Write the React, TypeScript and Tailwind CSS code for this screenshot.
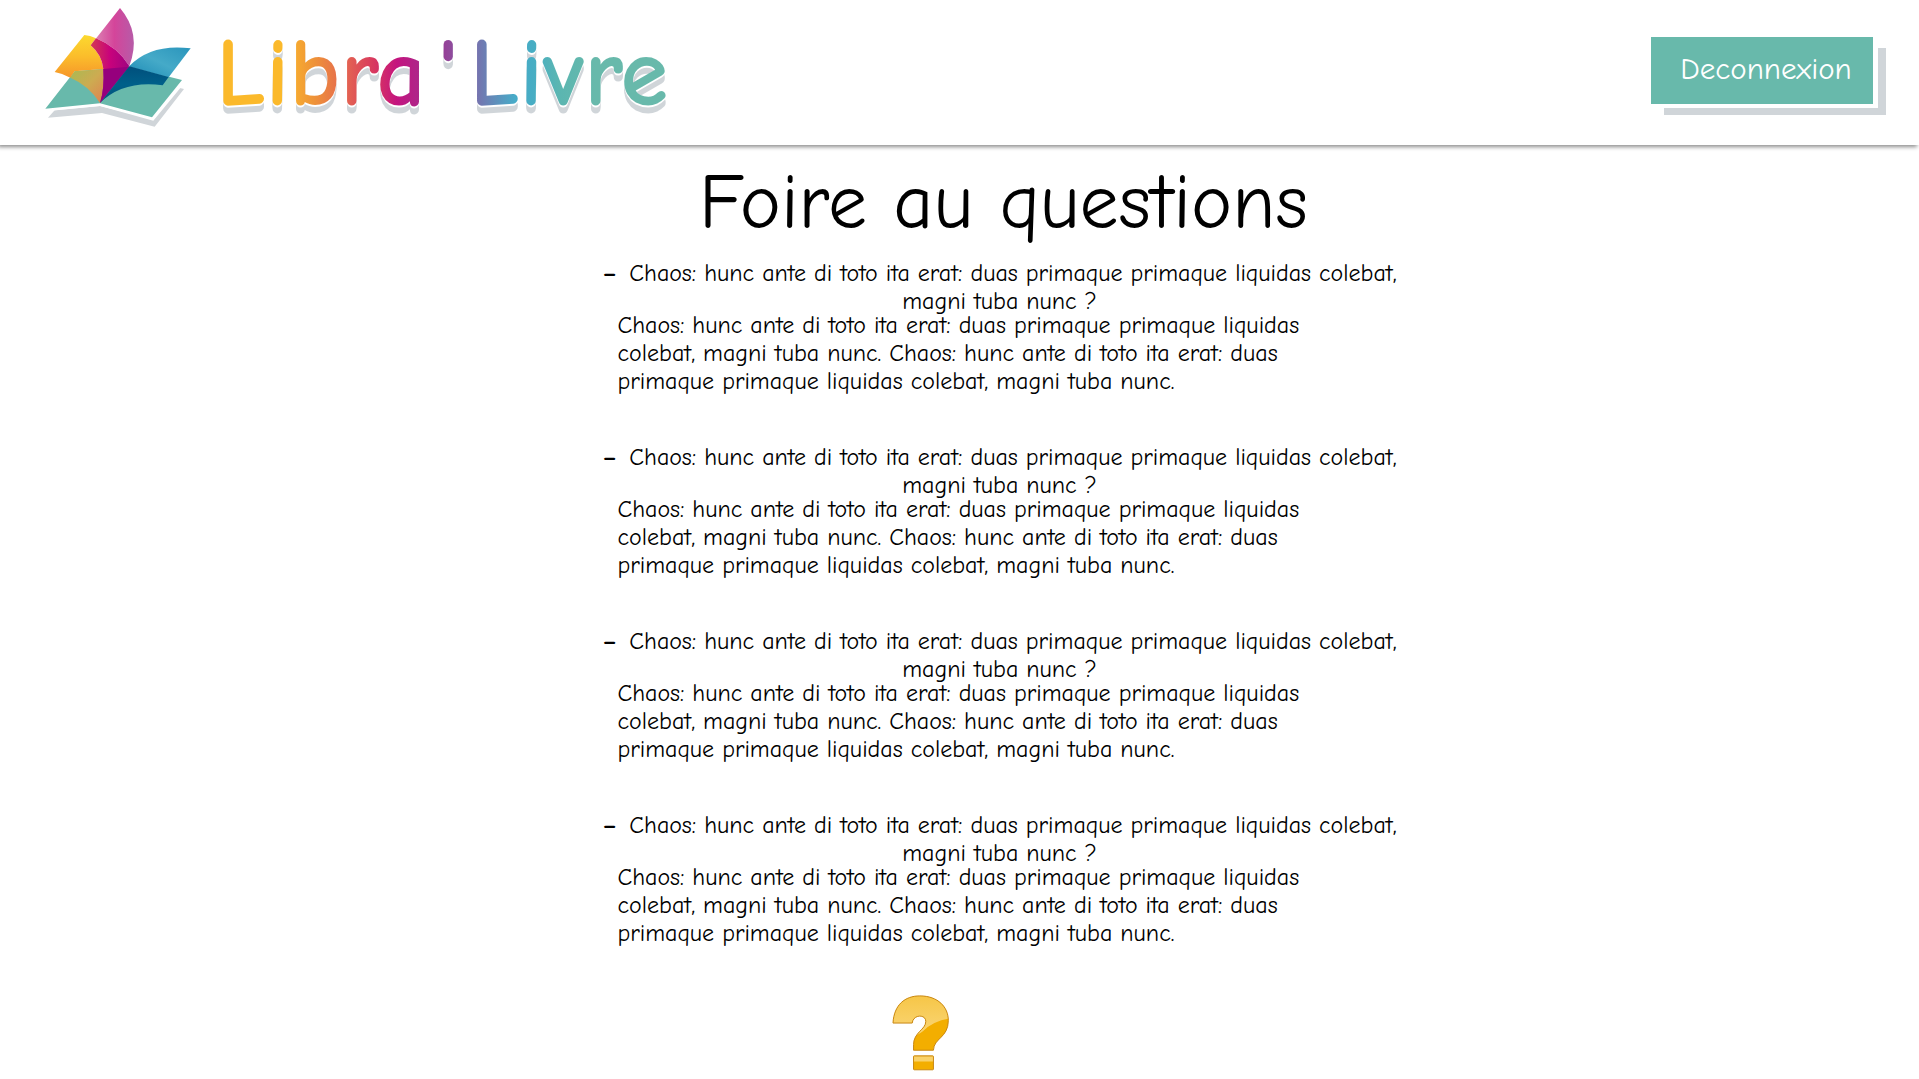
import React from "react";

const QUESTION =
  "Chaos: hunc ante di toto ita erat: duas primaque primaque liquidas colebat, magni tuba nunc ?";
const ANSWER =
  "Chaos: hunc ante di toto ita erat: duas primaque primaque liquidas colebat, magni tuba nunc. Chaos: hunc ante di toto ita erat: duas primaque primaque liquidas colebat, magni tuba nunc.";

const faq = [1, 2, 3, 4].map((id) => ({ id, question: QUESTION, answer: ANSWER }));

function BookLogo() {
  return (
    <svg viewBox="45 24 441 363" className="h-[121px] w-[147px] shrink-0" aria-hidden="true">
      <defs>
        <linearGradient id="yellow" x1="0" y1="0" x2="0" y2="1">
          <stop offset="0" stopColor="#fcd92f" />
          <stop offset="0.5" stopColor="#fbbd2b" />
          <stop offset="1" stopColor="#f6962a" />
        </linearGradient>
        <linearGradient id="olive" x1="0" y1="0" x2="1" y2="1">
          <stop offset="0" stopColor="#a9bb52" />
          <stop offset="0.5" stopColor="#cdab51" />
          <stop offset="1" stopColor="#e08150" />
        </linearGradient>
        <linearGradient id="pink" x1="0" y1="0" x2="1" y2="0">
          <stop offset="0" stopColor="#dd8fb8" />
          <stop offset="0.55" stopColor="#d4459a" />
          <stop offset="1" stopColor="#b75ba8" />
        </linearGradient>
        <linearGradient id="magenta" x1="0" y1="0" x2="1" y2="0">
          <stop offset="0" stopColor="#d33a52" />
          <stop offset="0.5" stopColor="#c8027c" />
          <stop offset="1" stopColor="#9f0480" />
        </linearGradient>
        <linearGradient id="blue" x1="0" y1="1" x2="1" y2="0">
          <stop offset="0" stopColor="#1c8ab5" />
          <stop offset="0.5" stopColor="#45aac8" />
          <stop offset="1" stopColor="#2a95bc" />
        </linearGradient>
        <linearGradient id="navy" x1="0" y1="0" x2="0" y2="1">
          <stop offset="0" stopColor="#004f7c" />
          <stop offset="0.5" stopColor="#00608a" />
          <stop offset="1" stopColor="#004f78" />
        </linearGradient>
      </defs>
      <path d="M54 353L74 331L210 318L364 356L440 262L462 267L374 380L216 339Z" fill="#d0d5d9" />
      <path d="M46 326L210 310L366 352L456 240L464 248L370 362L210 318L48 334Z" fill="#fff" />
      <path d="M46 326L134 214L298 200L456 240L366 352L210 310Z" fill="#68b9ab" />
      <path d="M74 216L163 105Q180 106 198 115L182 136Q216 165 220 207L134 214L121 233Q100 221 74 216Z" fill="url(#yellow)" />
      <path d="M121 233L134 214L220 207Q224 260 210 309Q176 256 121 233Z" fill="url(#olive)" />
      <path d="M182 136L270 24Q335 100 298 198Q262 141 198 115Z" fill="url(#pink)" />
      <path d="M182 136L198 115Q262 141 298 198L210 309Q224 265 220 207Q216 165 182 136Z" fill="url(#magenta)" />
      <path d="M220 207L298 200L210 309Q224 265 220 207Z" fill="#96007d" />
      <path d="M298 198Q364 130 482 145L416 232L300 201Z" fill="url(#blue)" />
      <path d="M298 199L416 231L398 256Q280 240 210 309Z" fill="url(#navy)" />
    </svg>
  );
}

function QuestionIcon() {
  return (
    <svg viewBox="66 76 172 228" className="h-[76px] w-[57px]" role="img" aria-label="Aide">
      <defs>
        <linearGradient id="gold" x1="0" y1="0" x2="0" y2="1">
          <stop offset="0" stopColor="#f6c544" />
          <stop offset="1" stopColor="#fad678" />
        </linearGradient>
        <clipPath id="mark">
          <path d="M69 160C72 105 105 78 150 78C205 78 236 112 236 152C236 205 192 205 191 242H131V225C131 188 168 180 168 155C168 133 130 133 127 160Z" />
        </clipPath>
      </defs>
      <path d="M69 160C72 105 105 78 150 78C205 78 236 112 236 152C236 205 192 205 191 242H131V225C131 188 168 180 168 155C168 133 130 133 127 160Z" fill="#f3ae00" />
      <path d="M60 70H240V146Q190 154 160 184Q140 200 125 200H60Z" fill="url(#gold)" clipPath="url(#mark)" />
      <path d="M69 160C72 105 105 78 150 78C205 78 236 112 236 152C236 205 192 205 191 242H131V225C131 188 168 180 168 155C168 133 130 133 127 160Z" fill="none" stroke="#c98712" strokeWidth="3" />
      <rect x="131" y="259" width="60" height="42" rx="2" fill="#f3ae00" />
      <path d="M132 260H190V276H132Z" fill="#f9d26a" />
      <rect x="131" y="259" width="60" height="42" rx="2" fill="none" stroke="#c98712" strokeWidth="3" />
    </svg>
  );
}

export default function App() {
  return (
    <div className="min-h-screen overflow-x-hidden bg-white font-['Comic_Neue','DejaVu_Sans',sans-serif] text-black">
      <header className="flex h-[145px] items-start justify-between pr-[46px] pl-[45px] shadow-[-2px_2px_4px_rgba(0,0,0,0.45)]">
        <a href="#" className="flex items-start gap-6 pt-2">
          <BookLogo />
          <span className="bg-[linear-gradient(90deg,#fbb92b_0%,#fbb92b_15%,#ee9139_22%,#e56a50_28%,#d8385f_35%,#c4147f_40%,#9b3592_49%,#7f67a9_56%,#48abc8_66%,#47adc4_70%,#5bb6b1_76%,#68b9ab_84%)] bg-clip-text pt-4 text-[97px] leading-[100px] font-bold text-transparent [filter:drop-shadow(0_2px_0_white)_drop-shadow(0_6px_0_#d0d5d9)]">
            Libra<span className="mx-3">'</span>Livre
          </span>
        </a>
        <button
          type="button"
          className="mt-[37px] h-[67px] w-[222px] bg-[#68b9ab] pb-0.5 pl-2 text-[31px] text-white shadow-[5px_4px_0_white,13px_11px_0_#d0d5d9]"
        >
          Deconnexion
        </button>
      </header>

      <main className="flex flex-col items-center pl-20">
        <h1 className="mt-3 pl-2 text-[78px] leading-[92px]">Foire au questions</h1>
        <div className="mt-[10px] flex w-[812px] flex-col gap-12 text-2xl leading-7">
          {faq.map((item) => (
            <section key={item.id}>
              <h2 className="text-center">
                <span className="mr-1 font-bold">–</span> {item.question}
              </h2>
              <p className="-mt-1 w-[716px] pl-6">{item.answer}</p>
            </section>
          ))}
        </div>
        <div className="mt-12 w-[812px] pl-[298px]">
          <QuestionIcon />
        </div>
      </main>
    </div>
  );
}
